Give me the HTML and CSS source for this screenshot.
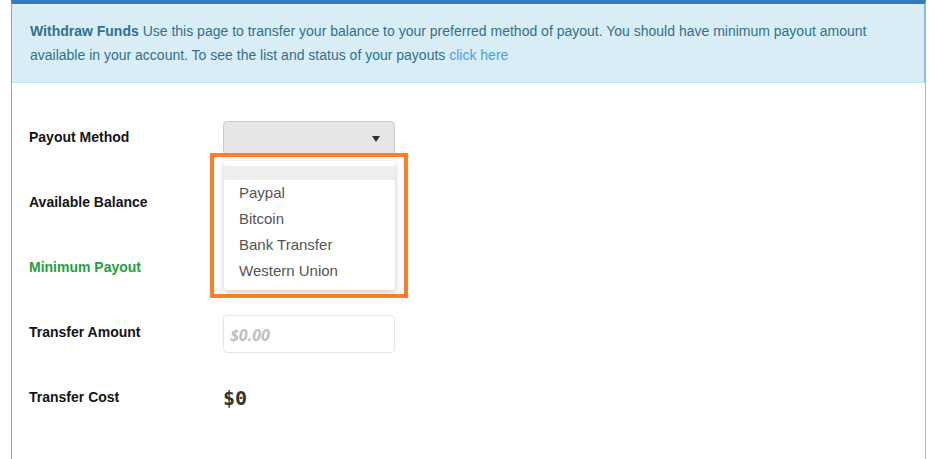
FILE: index.html
```html
<!DOCTYPE html>
<html>
<head>
<meta charset="utf-8">
<link rel="stylesheet" href="styles.css">
</head>
<body>
<div class="panel">
  <div class="alert">
    <p class="alert-text"><b class="title">Withdraw Funds</b> Use this page to transfer your balance to your preferred method of payout. You should have minimum payout amount available in your account. To see the list and status of your payouts <a href="#" class="link">click here</a></p>
  </div>
  <div class="form">
    <div class="row">
      <div class="label">Payout Method</div>
      <div class="control">
        <div class="select"><span class="caret"></span></div>
        <div class="highlight"></div>
        <ul class="options">
          <li class="opt-empty"></li>
          <li>Paypal</li>
          <li>Bitcoin</li>
          <li>Bank Transfer</li>
          <li>Western Union</li>
        </ul>
      </div>
    </div>
    <div class="row">
      <div class="label">Available Balance</div>
      <div class="control"></div>
    </div>
    <div class="row">
      <div class="label green">Minimum Payout</div>
      <div class="control"></div>
    </div>
    <div class="row">
      <div class="label">Transfer Amount</div>
      <div class="control"><input class="amount" type="text" placeholder="$0.00"></div>
    </div>
    <div class="row">
      <div class="label">Transfer Cost</div>
      <div class="control"><span class="cost">$0</span></div>
    </div>
  </div>
</div>
</body>
</html>
```

FILE: styles.css
```css
html, body {
  margin: 0;
  padding: 0;
  background: #ffffff;
  font-family: "Liberation Sans", Arial, sans-serif;
}
.panel {
  margin-left: 11px;
  width: 913px;
  height: 459px;
  border-top: 4px solid #337ab7;
  border-left: 1px solid #79a6dc;
  border-right: 1px solid #9bbbe0;
  box-sizing: content-box;
}
.alert {
  background: #d9edf7;
  border-bottom: 1px solid #bce8f1;
  border-right: 1px solid #85b8e3;
  padding: 16px 18px 15px 18px;
}
.alert-text {
  margin: 0;
  color: #31708f;
  font-size: 14px;
  line-height: 23.5px;
}
.title {
  font-weight: bold;
}
.link {
  color: #4a9fe0;
  text-decoration: none;
}
.form {
  padding: 21px 0 0 17px;
}
.row {
  display: grid;
  grid-template-columns: 194px 172px;
  height: 65px;
  align-items: center;
}
.label {
  font-size: 14px;
  font-weight: bold;
  color: #141414;
  padding-top: 1px;
}
.label.green {
  color: #24a13f;
}
.control {
  position: relative;
}
.select {
  box-sizing: border-box;
  height: 34px;
  margin-top: 3px;
  background: #e6e6e6;
  border: 1px solid #cccccc;
  border-radius: 4px;
  position: relative;
}
.caret {
  position: absolute;
  right: 14px;
  top: 14px;
  width: 0;
  height: 0;
  border-left: 4px solid transparent;
  border-right: 4px solid transparent;
  border-top: 6px solid #333333;
}
.highlight {
  position: absolute;
  left: -13px;
  top: 35px;
  width: 198px;
  height: 145px;
  box-sizing: border-box;
  border: 4px solid #ff7f27;
}
.options {
  position: absolute;
  left: 1px;
  top: 43px;
  width: 171px;
  box-sizing: border-box;
  margin: 0;
  padding: 5px 0 6px 0;
  list-style: none;
  background: #ffffff;
  border-radius: 4px;
  box-shadow: 0 2px 6px rgba(0, 0, 0, 0.22);
}
.options li {
  height: 26px;
  line-height: 26px;
  padding-left: 15px;
  font-size: 15px;
  color: #555555;
}
.options li.opt-empty {
  height: 14px;
  background: #eeeeee;
}
.amount {
  box-sizing: border-box;
  display: block;
  width: 172px;
  height: 38px;
  margin-top: 5px;
  border: 1px solid #e6e6e6;
  border-radius: 4px;
  padding: 2px 6px 0 6px;
  font-family: "Open Sans", sans-serif;
  font-style: italic;
  font-weight: 700;
  font-size: 16px;
  outline: none;
}
.amount::placeholder {
  color: #c0c0c0;
}
.cost {
  display: block;
  margin-top: 3px;
  font-family: "DejaVu Sans Mono", monospace;
  font-weight: bold;
  font-size: 20px;
  color: #333333;
}
```
